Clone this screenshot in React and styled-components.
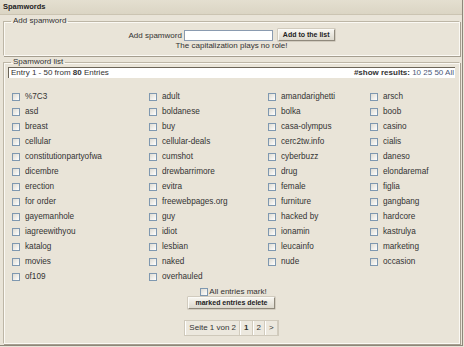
import styled, { createGlobalStyle } from "styled-components";

const words = [
    "%7C3", "adult", "amandarighetti", "arsch",
    "asd", "boldanese", "bolka", "boob",
    "breast", "buy", "casa-olympus", "casino",
    "cellular", "cellular-deals", "cerc2tw.info", "cialis",
    "constitutionpartyofwa", "cumshot", "cyberbuzz", "daneso",
    "dicembre", "drewbarrimore", "drug", "elondaremaf",
    "erection", "evitra", "female", "figlia",
    "for order", "freewebpages.org", "furniture", "gangbang",
    "gayemanhole", "guy", "hacked by", "hardcore",
    "iagreewithyou", "idiot", "ionamin", "kastrulya",
    "katalog", "lesbian", "leucainfo", "marketing",
    "movies", "naked", "nude", "occasion",
    "of109", "overhauled",
];

const Global = createGlobalStyle`
    body{
        margin: 0;
        background-color: #e9e4d8;
        font-family: "Liberation Sans", Arial, sans-serif;
        font-size: 8px;
        color: #333333;
    }
`

export default function App(){
    return(
        <Page>
            <Global />
            <Header>Spamwords</Header>
            <Body>
                <Box>
                    <Legend>Add spamword</Legend>
                    <AddRow>
                        <span>Add spamword</span>
                        <TextInput type="text" />
                        <Button>Add to the list</Button>
                    </AddRow>
                    <Note>The capitalization plays no role!</Note>
                </Box>
                <Box $grow>
                    <Legend>Spamword list</Legend>
                    <Bar>
                        <span>Entry 1 - 50 from <b>80</b> Entries</span>
                        <span><b>#show results:</b> <Link>10</Link> <Link>25</Link> <Link>50</Link> <Link>All</Link></span>
                    </Bar>
                    <Grid>
                        {words.map((w) => (
                            <Item key={w}>
                                <Check type="checkbox" />
                                <span>{w}</span>
                            </Item>
                        ))}
                    </Grid>
                    <Footer>
                        <MarkAll>
                            <Check type="checkbox" />
                            <span>All entries mark!</span>
                        </MarkAll>
                        <Button $wide>marked entries delete</Button>
                        <Pager>
                            <Cell>Seite 1 von 2</Cell>
                            <Cell $current>1</Cell>
                            <Cell>2</Cell>
                            <Cell>&gt;</Cell>
                        </Pager>
                    </Footer>
                </Box>
            </Body>
        </Page>
    )
}

const Page = styled.div`
    box-sizing: border-box;
    width: 463px;
    height: 346px;
    border-right: 1px solid #8e877a;
    border-bottom: 1px solid #8e877a;
    display: flex;
    flex-direction: column;
`

const Header = styled.div`
    height: 14px;
    line-height: 14px;
    padding-left: 3px;
    font-weight: bold;
    font-size: 7.5px;
    color: #222222;
    background: linear-gradient(#e4dfd0, #dbd5c4);
    border-bottom: 1px solid #cbc4b2;
`

const Body = styled.div`
    flex: 1;
    display: flex;
    flex-direction: column;
    padding: 1px 2px 1px 3px;
`

const Box = styled.fieldset`
    margin: 0;
    padding: 0 4px 4px 4px;
    border-color: #bdb6a6 #fbf9f4 #fbf9f4 #bdb6a6;
    border-style: solid;
    border-width: 1px;
    box-shadow: inset 1px 1px 0 #fbf9f4, 1px 1px 0 #a59e8f;
    min-width: 0;
    ${(p) => p.$grow && `flex: 1; margin-top: 1px;`}
`

const Legend = styled.legend`
    margin-left: 3px;
    padding: 0 2px;
    font-size: 8px;
    line-height: 10px;
    color: #333333;
`

const AddRow = styled.div`
    display: flex;
    justify-content: center;
    align-items: center;
    gap: 2px;
    margin-top: 3px;
`

const TextInput = styled.input`
    box-sizing: border-box;
    width: 89px;
    height: 11px;
    margin: 0 3px 0 0;
    padding: 0;
    border: 1px solid #8a9bb0;
    background: #ffffff;
`

const Button = styled.button`
    box-sizing: border-box;
    height: 12px;
    padding: 0 ${(p) => (p.$wide ? "7px" : "4px")};
    font-family: "Liberation Sans", Arial, sans-serif;
    font-size: 7px;
    font-weight: bold;
    color: #222222;
    background: linear-gradient(#f6f4ee, #dcd8cd);
    border: 1px solid #fbfaf6;
    border-right-color: #8f897c;
    border-bottom-color: #8f897c;
    box-shadow: 0 0 0 0.5px #b8b2a4;
    line-height: 10px;
`

const Note = styled.div`
    text-align: center;
    line-height: 10px;
`

const Bar = styled.div`
    display: flex;
    justify-content: space-between;
    align-items: center;
    height: 10px;
    padding: 0 1px 0 2px;
    background: #ffffff;
    border-top: 1px solid #6c6558;
    border-left: 1px solid #6c6558;
    line-height: 10px;
`

const Link = styled.span`
    color: #4c5a78;
`

const Grid = styled.div`
    display: grid;
    grid-template-columns: 137px 119px 102px 1fr;
    grid-auto-rows: 15px;
    margin-top: 11px;
    padding-left: 4px;
`

const Item = styled.div`
    display: flex;
    align-items: center;
    gap: 5px;
    font-size: 8.2px;
`

const Check = styled.input`
    appearance: none;
    box-sizing: border-box;
    width: 8px;
    height: 8px;
    margin: 0;
    border: 1px solid #7f98b0;
    background: linear-gradient(135deg, #dedbd2, #ffffff);
`

const Footer = styled.div`
    display: flex;
    flex-direction: column;
    align-items: center;
    margin-top: 2px;
`

const MarkAll = styled.div`
    display: flex;
    align-items: center;
    gap: 1px;
    height: 11px;
    margin-left: 4px;
`

const Pager = styled.div`
    display: flex;
    margin-top: 11px;
    border: 1px solid #cfc9bb;
    background: #ece8de;
`

const Cell = styled.div`
    height: 14px;
    line-height: 14px;
    padding: 0 3px;
    border-left: 1px solid #ffffff;
    border-right: 1px solid #d2ccbe;
    font-weight: ${(p) => (p.$current ? "bold" : "normal")};
`
